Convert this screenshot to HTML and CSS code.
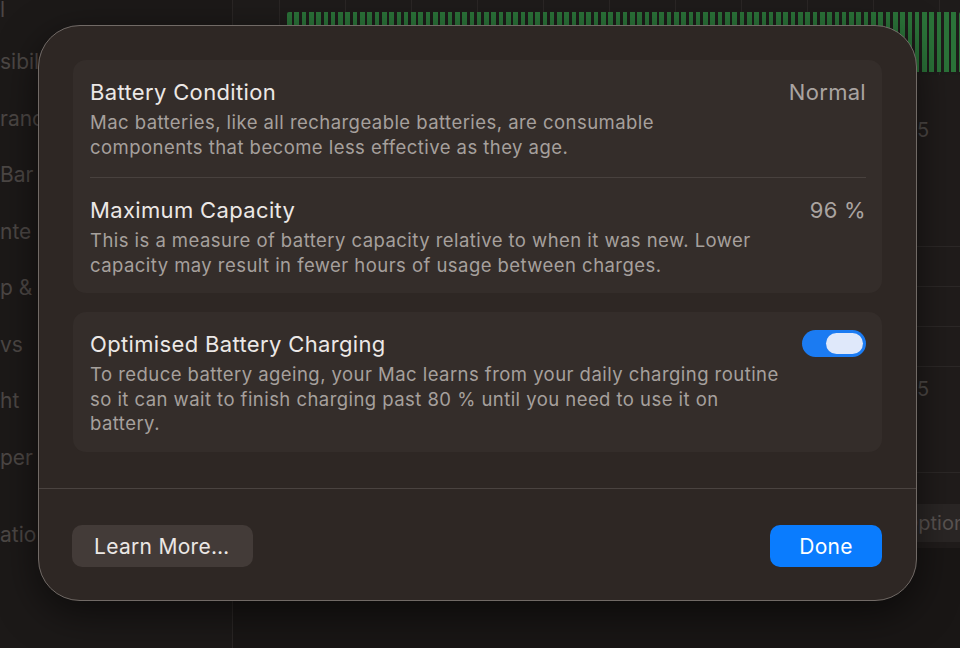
FILE: index.html
```html
<!DOCTYPE html>
<html>
<head>
  <meta charset="UTF-8">
  <meta name="viewport" content="width=device-width, initial-scale=1.0">
  <link rel="stylesheet" href="styles.css">
  <title>Battery Health</title>
</head>
<body>
  <div class="window">
    <aside class="sidebar">
      <div class="side-item first">l</div>
      <div class="side-item">sibili</div>
      <div class="side-item">ranc</div>
      <div class="side-item">Bar</div>
      <div class="side-item">nte</div>
      <div class="side-item">p &amp;</div>
      <div class="side-item">vs</div>
      <div class="side-item">ht</div>
      <div class="side-item">per</div>
      <div class="side-item group">atio</div>
    </aside>

    <main class="content">
      <div class="chart">
        <div class="bars"></div>
      </div>
      <div class="panel">
        <div class="prow tall"><span class="axis">5</span></div>
        <div class="prow"></div>
        <div class="prow"></div>
        <div class="prow"></div>
        <div class="prow mid"><span class="axis">5</span></div>
        <div class="prow foot"><span class="opt-btn">Options</span></div>
      </div>
    </main>
  </div>

  <div class="dialog">
    <div class="dialog-body">
      <div class="card">
        <div class="row">
          <div class="text">
            <div class="title">Battery Condition</div>
            <div class="desc">Mac batteries, like all rechargeable batteries, are consumable components that become less effective as they age.</div>
          </div>
          <div class="value">Normal</div>
        </div>
        <div class="row">
          <div class="text">
            <div class="title">Maximum Capacity</div>
            <div class="desc">This is a measure of battery capacity relative to when it was new. Lower capacity may result in fewer hours of usage between charges.</div>
          </div>
          <div class="value">96 %</div>
        </div>
      </div>

      <div class="card">
        <div class="row">
          <div class="text wide">
            <div class="title">Optimised Battery Charging</div>
            <div class="desc">To reduce battery ageing, your Mac learns from your daily charging routine so it can wait to finish charging past 80 % until you need to use it on battery.</div>
          </div>
          <div class="toggle on"><span class="knob"></span></div>
        </div>
      </div>
    </div>

    <div class="dialog-footer">
      <button class="btn btn-secondary">Learn More…</button>
      <button class="btn btn-primary">Done</button>
    </div>
  </div>
</body>
</html>
```

FILE: styles.css
```css
body {
  font-family: Inter, "Noto Sans", sans-serif;
  background-color: #191615;
  margin: 0;
  padding: 0;
  height: 648px;
  overflow: hidden;
}

.window {
  display: flex;
  height: 648px;
}

/* background: settings sidebar, dimmed */
.sidebar {
  width: 232px;
  background-color: #1c1918;
  border-right: 1px solid #2a2625;
  overflow: hidden;
}

.side-item {
  height: 56.5px;
  line-height: 56.5px;
  font-size: 21px;
  color: #4c4745;
  white-space: nowrap;
}

.side-item.first {
  height: 34px;
  line-height: 20px;
}

.side-item.group {
  margin-top: 21px;
}

/* background: content pane */
.content {
  flex: 1;
  display: flex;
  flex-direction: column;
}

.chart {
  height: 75px;
  background-color: #1e1b1a;
  background-image: repeating-linear-gradient(90deg, transparent 0 46px, #2a2625 46px 47px, transparent 47px 66px);
  padding: 12px 0 0 54px;
  box-sizing: border-box;
}

.bars {
  height: 60px;
  background-image: repeating-linear-gradient(90deg, #2b7339 0 4.6px, transparent 4.6px 7.3px);
  border-radius: 2px 2px 0 0;
}

.panel {
  height: 473px;
  background-color: #201c1b;
  display: flex;
  flex-direction: column;
}

.prow {
  height: 39px;
  border-bottom: 1px solid #2c2827;
  display: flex;
  justify-content: flex-end;
}

.prow.tall {
  height: 171px;
  align-items: flex-start;
}

.prow.mid {
  height: 105px;
}

.prow.foot {
  flex: 1;
  border-bottom: none;
  align-items: flex-start;
}

.axis {
  width: 43px;
  font-size: 20px;
  color: #4e4947;
}

.prow.tall .axis {
  padding-top: 43px;
}

.prow.mid .axis {
  padding-top: 10px;
}

.opt-btn {
  margin-top: 31px;
  width: 70px;
  height: 38px;
  line-height: 38px;
  padding-left: 13px;
  box-sizing: border-box;
  background-color: #2a2625;
  border-radius: 8px 0 0 8px;
  font-size: 20px;
  color: #5a5452;
  white-space: nowrap;
  overflow: hidden;
}

/* battery health sheet */
.dialog {
  position: absolute;
  left: 38px;
  top: 25px;
  width: 879px;
  height: 576px;
  box-sizing: border-box;
  background-color: #2e2724;
  border: 1px solid #716a66;
  border-radius: 42px;
  box-shadow: 0 12px 40px rgba(0, 0, 0, 0.55);
  display: flex;
  flex-direction: column;
  overflow: hidden;
}

.dialog-body {
  flex: 1;
  padding: 34px 34px 0;
  display: flex;
  flex-direction: column;
  gap: 19px;
  border-bottom: 1px solid #4a4340;
}

.card {
  background-color: #342d2a;
  border-radius: 13px;
  padding: 0 16px 0 17px;
}

.row {
  display: flex;
  align-items: flex-start;
  gap: 20px;
  padding: 18px 0;
}

.row:last-child {
  padding-bottom: 16px;
}

.row + .row {
  border-top: 1px solid #48413e;
}

.text {
  width: 672px;
}

.text.wide {
  flex: 1;
  width: auto;
}

.title {
  font-size: 22px;
  line-height: 28px;
  letter-spacing: 0.35px;
  color: #ece8e6;
}

.desc {
  margin-top: 4px;
  font-size: 18.5px;
  line-height: 24.5px;
  letter-spacing: 0.45px;
  color: #a6a09d;
}

.value {
  margin-left: auto;
  font-size: 22px;
  line-height: 28px;
  letter-spacing: 0.3px;
  color: #aaa4a1;
  white-space: nowrap;
}

.toggle {
  width: 64px;
  height: 27px;
  border-radius: 14px;
  background-color: #1b7bf2;
  display: flex;
  align-items: center;
  justify-content: flex-end;
  padding: 0 3px;
  box-sizing: border-box;
  flex-shrink: 0;
}

.knob {
  width: 37px;
  height: 21px;
  border-radius: 11px;
  background-color: #dfe8fa;
}

.dialog-footer {
  height: 111px;
  padding: 36px 34px 0 33px;
  box-sizing: border-box;
  display: flex;
  justify-content: space-between;
  align-items: flex-start;
}

.btn {
  height: 42px;
  border: none;
  border-radius: 10px;
  font-family: Inter, "Noto Sans", sans-serif;
  font-size: 21px;
  letter-spacing: 0.3px;
  cursor: pointer;
}

.btn-secondary {
  width: 181px;
  background-color: #433b38;
  color: #ebe7e5;
  text-align: left;
  padding: 0 0 0 22px;
}

.btn-primary {
  width: 112px;
  background-color: #0a7cfe;
  color: #ffffff;
}
```
